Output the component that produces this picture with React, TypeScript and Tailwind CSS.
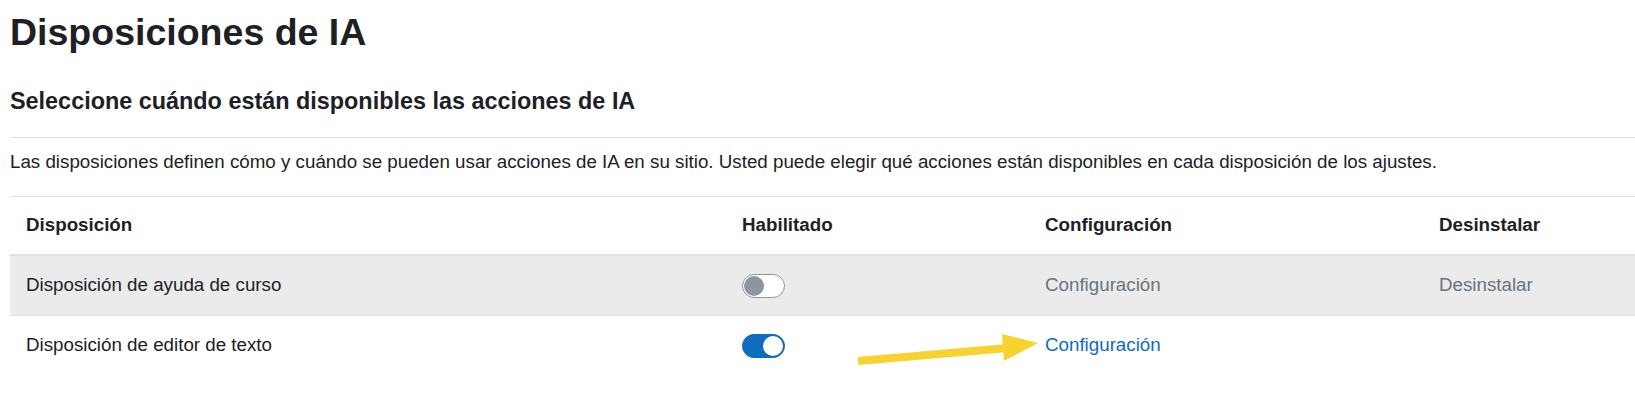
import { useState } from "react";

interface Placement {
  name: string;
  enabled: boolean;
}

const initialPlacements: Placement[] = [
  { name: "Disposición de ayuda de curso", enabled: false },
  { name: "Disposición de editor de texto", enabled: true },
];

function Toggle({ on, onChange }: { on: boolean; onChange: () => void }) {
  return (
    <button
      type="button"
      onClick={onChange}
      className={
        on
          ? "relative w-[43px] h-[24px] rounded-full bg-[#0f6cbf] border border-[#0f6cbf]"
          : "relative w-[43px] h-[24px] rounded-full bg-white border border-[#8f959e]"
      }
    >
      <span
        className={
          on
            ? "absolute top-[1px] right-[1px] w-[20px] h-[20px] rounded-full bg-white"
            : "absolute top-[1px] left-[1px] w-[20px] h-[20px] rounded-full bg-[#8f959e]"
        }
      />
    </button>
  );
}

export default function App() {
  const [placements, setPlacements] = useState(initialPlacements);

  function toggle(i: number) {
    setPlacements((ps) => ps.map((p, j) => (j === i ? { ...p, enabled: !p.enabled } : p)));
  }

  return (
    <div className="relative min-h-[411px] bg-white pl-[10px] pt-[10px] text-[#1d2125] font-['Liberation_Sans',Arial,sans-serif] overflow-hidden">
      <h1 className="text-[37.5px] leading-[44px] font-bold">Disposiciones de IA</h1>
      <h2 className="mt-[33px] text-[23.4px] leading-[28px] font-bold">
        Seleccione cuándo están disponibles las acciones de IA
      </h2>
      <div className="mt-[22px] border-t border-[#dee2e6]" />
      <p className="mt-[10px] text-[18.75px] leading-[28px] whitespace-nowrap">
        Las disposiciones definen cómo y cuándo se pueden usar acciones de IA en su sitio. Usted puede elegir qué
        acciones están disponibles en cada disposición de los ajustes.
      </p>

      <div className="mt-[20px] text-[18.75px]">
        <div className="grid grid-cols-[716px_303px_394px_1fr] h-[60px] items-center border-t border-b-2 border-[#dee2e6] font-bold">
          <div className="px-4">Disposición</div>
          <div className="px-4">Habilitado</div>
          <div className="px-4">Configuración</div>
          <div className="px-4">Desinstalar</div>
        </div>
        {placements.map((p, i) => (
          <div
            key={p.name}
            className={
              i === 0
                ? "grid grid-cols-[716px_303px_394px_1fr] h-[60px] items-center border-b border-[#dee2e6] bg-[#ebebeb]"
                : "grid grid-cols-[716px_303px_394px_1fr] h-[59px] items-center"
            }
          >
            <div className="px-4">{p.name}</div>
            <div className="px-4 flex items-center">
              <Toggle on={p.enabled} onChange={() => toggle(i)} />
            </div>
            <div className="px-4">
              {p.enabled ? (
                <a href="#" className="text-[#0f6cbf]">
                  Configuración
                </a>
              ) : (
                <span className="text-[#6a737b]">Configuración</span>
              )}
            </div>
            <div className="px-4">{!p.enabled && <span className="text-[#6a737b]">Desinstalar</span>}</div>
          </div>
        ))}
      </div>

      <svg className="absolute left-[850px] top-[325px]" width="200" height="50" viewBox="0 0 200 50">
        <line x1="8" y1="36" x2="158" y2="23" stroke="#f6d32f" strokeWidth="8" />
        <polygon points="152,9 154,36 188,18" fill="#f6d32f" />
      </svg>
    </div>
  );
}
